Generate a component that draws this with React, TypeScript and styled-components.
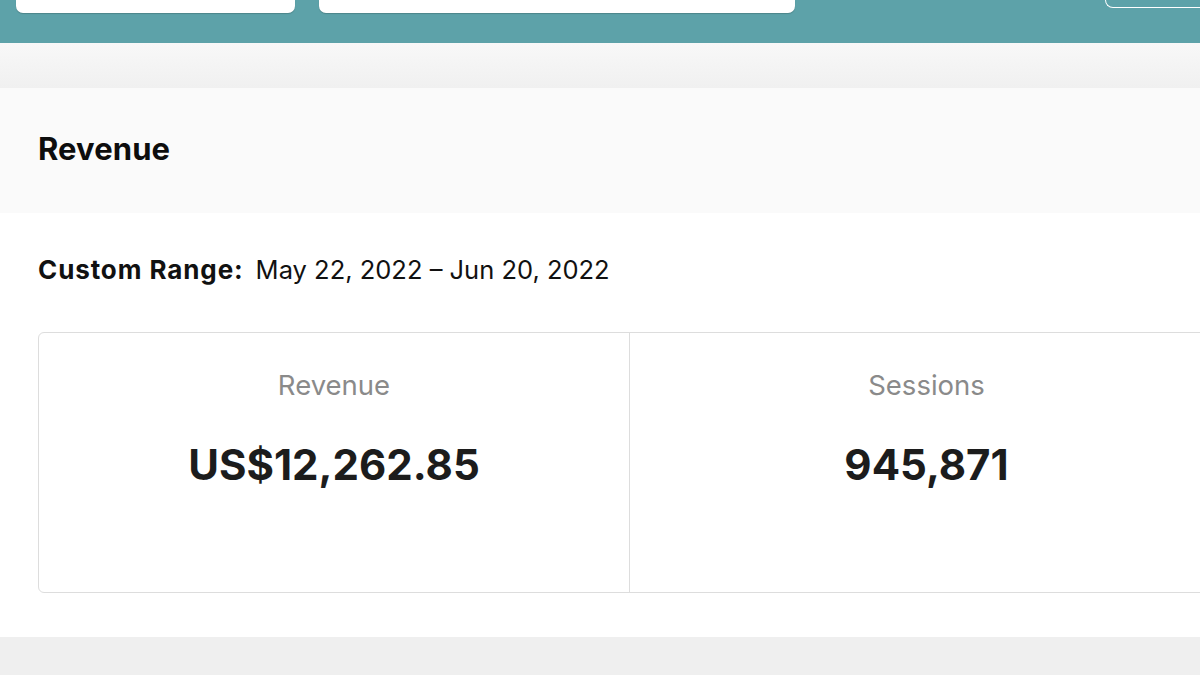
import React from "react";
import styled, { createGlobalStyle } from "styled-components";

const Global = createGlobalStyle`
  html, body { margin: 0; padding: 0; background: #efefef; }
  body { font-family: "Inter", "Noto Sans", sans-serif; color: #111; overflow: hidden; }
  * { box-sizing: border-box; }
`;

const Page = styled.div`
  width: 1200px;
  height: 675px;
  display: flex;
  flex-direction: column;
  background: #efefef;
  overflow: hidden;
`;

const TopBar = styled.div`
  height: 43px;
  background: #5da2a9;
  display: flex;
  align-items: flex-start;
  padding-left: 16px;
  gap: 24px;
  flex-shrink: 0;
`;

const Field = styled.div<{ $w: number }>`
  width: ${(p) => p.$w}px;
  height: 13px;
  background: #fff;
  border-radius: 0 0 7px 7px;
  box-shadow: 0 1px 1px rgba(0, 0, 0, 0.18);
`;

const OutlineBtn = styled.div`
  margin-left: auto;
  width: 95px;
  height: 8px;
  border: 1.5px solid #fff;
  border-top: none;
  border-right: none;
  border-radius: 0 0 0 9px;
`;

const Strip = styled.div`
  height: 45px;
  background: linear-gradient(#f8f8f8, #f0f0f0);
  flex-shrink: 0;
`;

const Card = styled.section`
  background: #fff;
  flex-shrink: 0;
`;

const CardHeader = styled.div`
  height: 125px;
  background: #fafafa;
  display: flex;
  align-items: center;
  padding-left: 38px;
`;

const Title = styled.h2`
  margin: 0 0 5px;
  font-size: 31px;
  font-weight: 700;
  color: #0d0d0d;
  letter-spacing: 0.1px;
`;

const CardBody = styled.div`
  height: 424px;
  padding: 39px 0 0 38px;
`;

const RangeLine = styled.div`
  font-size: 25.5px;
  line-height: 36px;
  color: #111;
  display: flex;
  gap: 12px;
`;

const RangeLabel = styled.span`
  font-weight: 700;
  font-size: 26px;
  letter-spacing: 0.9px;
`;

const Stats = styled.div`
  margin-top: 44px;
  width: 1186px;
  height: 261px;
  border: 1.5px solid #dddddd;
  border-radius: 6px;
  display: grid;
  grid-template-columns: 591px 1fr;
`;

const Stat = styled.div<{ $divider?: boolean }>`
  display: flex;
  flex-direction: column;
  align-items: center;
  padding-top: 34px;
  border-right: ${(p) => (p.$divider ? "1.5px solid #dddddd" : "none")};
`;

const StatLabel = styled.div`
  font-size: 27.5px;
  line-height: 36px;
  color: #8a8a8a;
`;

const StatValue = styled.div`
  margin-top: 36px;
  font-size: 42px;
  line-height: 52px;
  font-weight: 700;
  color: #1c1c1c;
`;

export default function App() {
  return (
    <>
      <Global />
      <Page>
        <TopBar>
          <Field $w={279} />
          <Field $w={476} />
          <OutlineBtn />
        </TopBar>
        <Strip />
        <Card>
          <CardHeader>
            <Title>Revenue</Title>
          </CardHeader>
          <CardBody>
            <RangeLine>
              <RangeLabel>Custom Range:</RangeLabel>
              <span>May 22, 2022 – Jun 20, 2022</span>
            </RangeLine>
            <Stats>
              <Stat $divider>
                <StatLabel>Revenue</StatLabel>
                <StatValue>US$12,262.85</StatValue>
              </Stat>
              <Stat>
                <StatLabel>Sessions</StatLabel>
                <StatValue>945,871</StatValue>
              </Stat>
            </Stats>
          </CardBody>
        </Card>
      </Page>
    </>
  );
}
